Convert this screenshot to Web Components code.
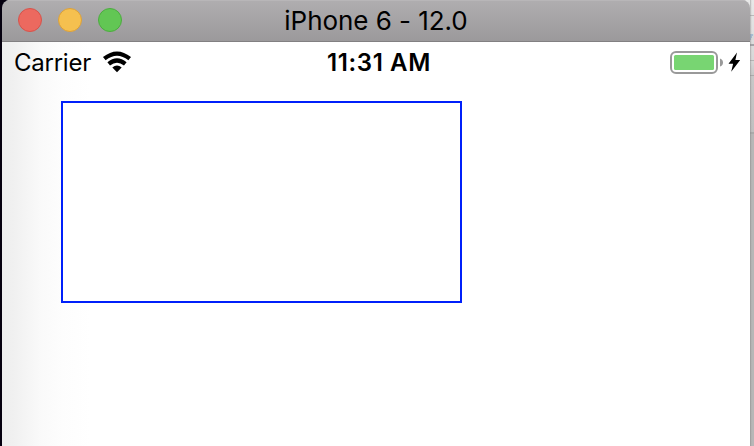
<!DOCTYPE html>
<html lang="en">
<head>
<meta charset="utf-8">
<title>iPhone 6 - 12.0</title>
<style>
html,body{margin:0;height:100%;overflow:hidden;background:#fff}
body{font-family:Inter,sans-serif;color:#000}
</style>
</head>
<body>
<sim-desktop>
  <sim-window>
    <title-bar slot="bar">iPhone 6 - 12.0</title-bar>
    <status-bar>
      <span slot="carrier">Carrier</span>
      <span slot="time">11:31 AM</span>
    </status-bar>
    <outlined-view></outlined-view>
  </sim-window>
</sim-desktop>
<script>
const define = (name, html) => {
  const t = document.createElement('template');
  t.innerHTML = html;
  customElements.define(name, class extends HTMLElement {
    constructor() {
      super();
      this.attachShadow({mode: 'open'}).append(t.content.cloneNode(true));
    }
  });
};

define('sim-desktop', `
<style>
:host{display:grid;grid-template-columns:2px 748px 4px;width:754px;height:446px;overflow:hidden;
 background:linear-gradient(90deg,#05000f 0 8px,transparent 8px),linear-gradient(#e8e8e8 0,#d8d8d8 60px,#c8c8c8 75px,#c0c0c0 132px,#b7b7b7 134px)}
.edge{background:
 linear-gradient(90deg,#7778 0,#8883 1px,transparent 2px),
 linear-gradient(#aaa,#aaa) 0 132px/4px 2px no-repeat,
 linear-gradient(#aaa,#aaa) 0 75px/4px 1px no-repeat,
 linear-gradient(#b4b4b4,#b4b4b4) 0 60px/4px 1px no-repeat,
 linear-gradient(#a4a4a8,#a4a4a8) 0 44px/4px 2px no-repeat,
 linear-gradient(120deg,#a6bdd4 50%,#d8d8d8 50%) 0 34px/4px 6px no-repeat,
 linear-gradient(#b9b9b9,#b9b9b9) 0 15px/4px 1px no-repeat}
</style>
<div></div><slot></slot><div class="edge"></div>`);

define('sim-window', `
<style>
:host{display:flex;flex-direction:column;border-radius:8px 8px 0 0;overflow:hidden}
.screen{flex:1;background:linear-gradient(90deg,#eeeeee 0,#f0f0f0 11px,#f5f5f5 25px,#fafafa 40px,#fdfdfd 60px,#fff 88px)}
</style>
<slot name="bar"></slot><div class="screen"><slot></slot></div>`);

define('traffic-light', `
<style>:host{display:block;box-sizing:border-box;width:24px;height:24px;border-radius:50%;
 background:var(--fill);border:1px solid var(--rim)}</style>`);

define('title-bar', `
<style>
:host{display:grid;grid-template-columns:1fr auto 1fr;align-items:center;box-sizing:border-box;height:42px;
 padding:0 16px 1px;background:linear-gradient(#b0aeb0,#9b999b);border-bottom:1px solid #828082;
 box-shadow:inset 0 1px #b8b6b8;font-size:26px;line-height:38px}
.lights{display:flex;gap:16px}
.title{letter-spacing:-.05px;padding-top:2px}
</style>
<div class="lights">
 <traffic-light style="--fill:#ec695f;--rim:#d6534b"></traffic-light>
 <traffic-light style="--fill:#f5c04f;--rim:#dba03a"></traffic-light>
 <traffic-light style="--fill:#62c654;--rim:#4dab40"></traffic-light>
</div>
<div class="title"><slot></slot></div>`);

define('wifi-icon', `
<style>:host{display:block;width:28px;height:20px;padding-bottom:2px}svg{display:block;overflow:visible}</style>
<svg width="28" height="20" viewBox="0 0 28 20" fill="none" stroke="#000">
<path d="M1.3 6.7Q14-3.5 26.7 6.7" stroke-width="4.2"/>
<path d="M5.7 11.8Q14 5.2 22.3 11.8" stroke-width="4.2"/>
<path d="M9.3 15.6Q14 11.6 18.7 15.6L14 20.2Z" fill="#000" stroke="none"/></svg>`);

define('battery-icon', `
<style>:host{display:block}svg{display:block}</style>
<svg width="72" height="24" viewBox="0 0 72 24">
<rect x="1" y="1" width="46" height="21" rx="5" fill="#fff" stroke="#999" stroke-width="2"/>
<rect x="4" y="4" width="40" height="15" rx="1.5" fill="#78d572"/>
<path d="M50 7.5Q53 8.5 53 11.5T50 15.5Z" fill="#999"/>
<path d="M67 1.5L58.5 12.8H63.1L61.2 20.7L70.2 9H65.4Z" fill="#000"/></svg>`);

define('status-bar', `
<style>
:host{display:grid;grid-template-columns:1fr auto 1fr;align-items:center;height:42px;
 padding:0 8px 0 12px;font-size:24px;line-height:42px}
.left{display:flex;align-items:center;gap:12px;letter-spacing:-.25px}
.time{font-weight:580;letter-spacing:.6px;padding-left:2px}
.right{justify-self:end}
</style>
<div class="left"><slot name="carrier"></slot><wifi-icon></wifi-icon></div>
<div class="time"><slot name="time"></slot></div>
<div class="right"><battery-icon></battery-icon></div>`);

define('outlined-view', `
<style>:host{display:block;box-sizing:border-box;width:401px;height:202px;margin:17px 0 0 59px;
 border:2px solid #0020fa;background:#fff}</style>`);
</script>
</body>
</html>
